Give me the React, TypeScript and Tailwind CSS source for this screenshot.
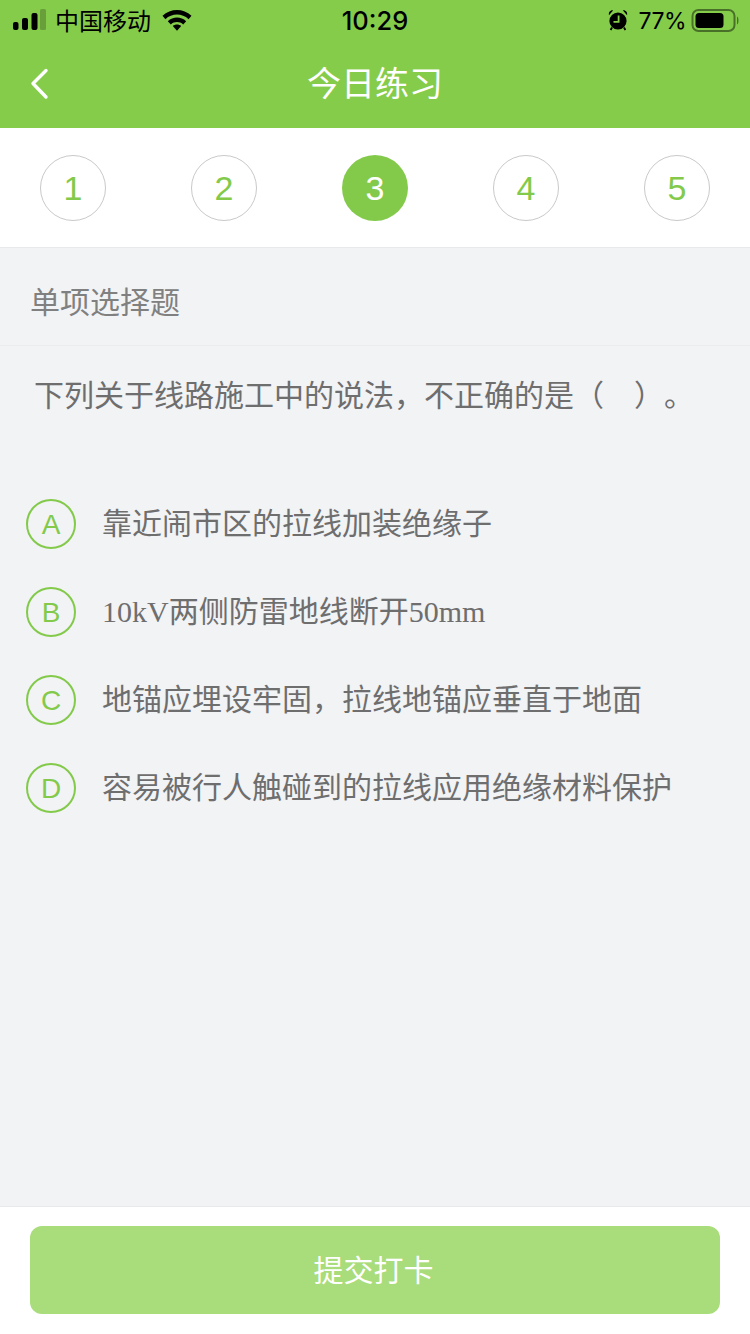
import React from "react";

const steps = [1, 2, 3, 4, 5];
const current = 3;

const options = [
 {key: "A", text: "靠近闹市区的拉线加装绝缘子"},
 {key: "B", text: "10kV两侧防雷地线断开50mm"},
 {key: "C", text: "地锚应埋设牢固，拉线地锚应垂直于地面"},
 {key: "D", text: "容易被行人触碰到的拉线应用绝缘材料保护"},
];

const cjk = "font-['Noto_Sans_CJK_SC',sans-serif]";
const mixed = "font-['Liberation_Serif','Noto_Sans_CJK_SC',serif]";

const SignalBars = () => (
 <svg width="34" height="22" viewBox="0 0 34 22" className="block">
  <rect x="0" y="13" width="5.5" height="8" rx="2" fill="#000" />
  <rect x="9" y="9" width="6" height="12" rx="2" fill="#000" />
  <rect x="18.5" y="4" width="6" height="17" rx="2" fill="#000" />
  <rect x="27" y="0" width="6" height="21" rx="1.5" fill="#000" fillOpacity="0.22" />
 </svg>
);

const Wifi = () => (
 <svg width="30" height="22" viewBox="0 0 30 22" className="block">
  <path d="M0.5 6.8C8.6 -1 21.4 -1 29.5 6.8L26.6 10.2C20 4 10 4 3.4 10.2Z" fill="#000" />
  <path d="M5.8 12.2C11 7.4 19 7.4 24.2 12.2L21.2 15.4C17.6 12.2 12.4 12.2 8.8 15.4Z" fill="#000" />
  <path d="M10.8 17C13.2 15 16.8 15 19.2 17L15 21.8Z" fill="#000" />
 </svg>
);

const Alarm = () => (
 <svg width="20" height="22" viewBox="0 0 20 22" className="block">
  <circle cx="10" cy="12" r="8.6" fill="#000" />
  <path d="M1 6.2C0.2 3.4 2.2 0.8 5.2 1.2Z" fill="#000" />
  <path d="M19 6.2C19.8 3.4 17.8 0.8 14.8 1.2Z" fill="#000" />
  <path d="M4 18.5L2.6 21M16 18.5L17.4 21" stroke="#000" strokeWidth="1.8" />
  <path d="M10.6 6.5V12.8H5.5" stroke="#87ce4b" strokeWidth="1.8" fill="none" />
 </svg>
);

const Battery = () => (
 <svg width="48" height="24" viewBox="0 0 48 24" className="block">
  <rect x="1.5" y="1" width="42" height="21" rx="6" fill="none" stroke="#000" strokeOpacity="0.45" strokeWidth="2" />
  <rect x="4.5" y="4" width="28" height="15" rx="3.5" fill="#000" />
  <path d="M46 7.5C48 8.5 48 14.5 46 15.5Z" fill="#000" fillOpacity="0.45" />
 </svg>
);

const App: React.FC = () => {
 return (
  <div className={`flex h-[1334px] w-[750px] flex-col overflow-hidden bg-[#f2f3f5] ${cjk}`}>
   <header className="h-[128px] shrink-0 bg-[#86cc4b]">
    <div className="relative flex h-[40px] items-center justify-between pl-[13px] pr-[11px] text-black">
     <div className="flex items-center">
      <SignalBars />
      <span className="ml-[8px] text-[24px] leading-none">中国移动</span>
      <span className="ml-[11px]">
       <Wifi />
      </span>
     </div>
     <span className="absolute left-1/2 top-[7px] -translate-x-1/2 font-['Inter',sans-serif] text-[25.5px] font-medium leading-[28px]">
      10:29
     </span>
     <div className="flex items-center">
      <Alarm />
      <span className="ml-[10px] mt-[2px] font-['Inter',sans-serif] text-[23px] leading-none tracking-[-0.5px]">77%</span>
      <span className="ml-[5px] mt-[1px]">
       <Battery />
      </span>
     </div>
    </div>
    <div className="relative flex h-[88px] items-center justify-center">
     <svg width="20" height="32" viewBox="0 0 20 32" className="absolute left-[29px] top-[28px]">
      <path d="M17 2.5L4 15.5L17 29" fill="none" stroke="#fff" strokeWidth="3.4" strokeLinecap="round" strokeLinejoin="round" />
     </svg>
     <h1 className="mb-[5px] text-[34px] font-normal leading-none text-white">今日练习</h1>
    </div>
   </header>

   <div className="flex h-[120px] shrink-0 items-start justify-between border-b border-[#e8e9eb] bg-white px-[40px] pt-[27px]">
    {steps.map((n) =>
     n === current ? (
      <div
       key={n}
       className="flex h-[66px] w-[66px] items-center justify-center rounded-full bg-[#83ca4b] font-['Liberation_Sans',sans-serif] text-[34px] text-white"
      >
       {n}
      </div>
     ) : (
      <div
       key={n}
       className="flex h-[66px] w-[66px] items-center justify-center rounded-full border border-[#c9c9c9] font-['Liberation_Sans',sans-serif] text-[34px] text-[#83ca4b]"
      >
       {n}
      </div>
     ),
    )}
   </div>

   <div className="flex h-[98px] shrink-0 items-center border-b border-[#ebecee] pl-[30px] pt-[6px] text-[30px] leading-none text-[#808080]">
    单项选择题
   </div>

   <main className="flex-1">
    <p className="pl-[34px] pt-[29px] text-[30px] leading-[36px] text-[#6e6e6e] [text-spacing-trim:space-all]">下列关于线路施工中的说法，不正确的是（　）。</p>
    <ul className="mt-[88px] flex flex-col gap-[38px] pl-[26px]">
     {options.map((o) => (
      <li key={o.key} className="flex h-[50px] items-center">
       <span className="flex h-[50px] w-[50px] shrink-0 items-center justify-center rounded-full border-2 border-[#83ca4b] pt-[1px] font-['Liberation_Sans',sans-serif] text-[28px] text-[#83ca4b]">
        {o.key}
       </span>
       <span className={`ml-[26px] whitespace-nowrap text-[30px] leading-none text-[#6e6e6e] ${mixed}`}>{o.text}</span>
      </li>
     ))}
    </ul>
   </main>

   <footer className="h-[128px] shrink-0 border-t border-[#e8e9eb] bg-white px-[30px] pt-[19px]">
    <button className="flex h-[88px] w-full items-center justify-center rounded-[12px] bg-[#a9dc7a] pb-[4px] pr-[3px] text-[30px] text-white">
     提交打卡
    </button>
   </footer>
  </div>
 );
};

export default App;
